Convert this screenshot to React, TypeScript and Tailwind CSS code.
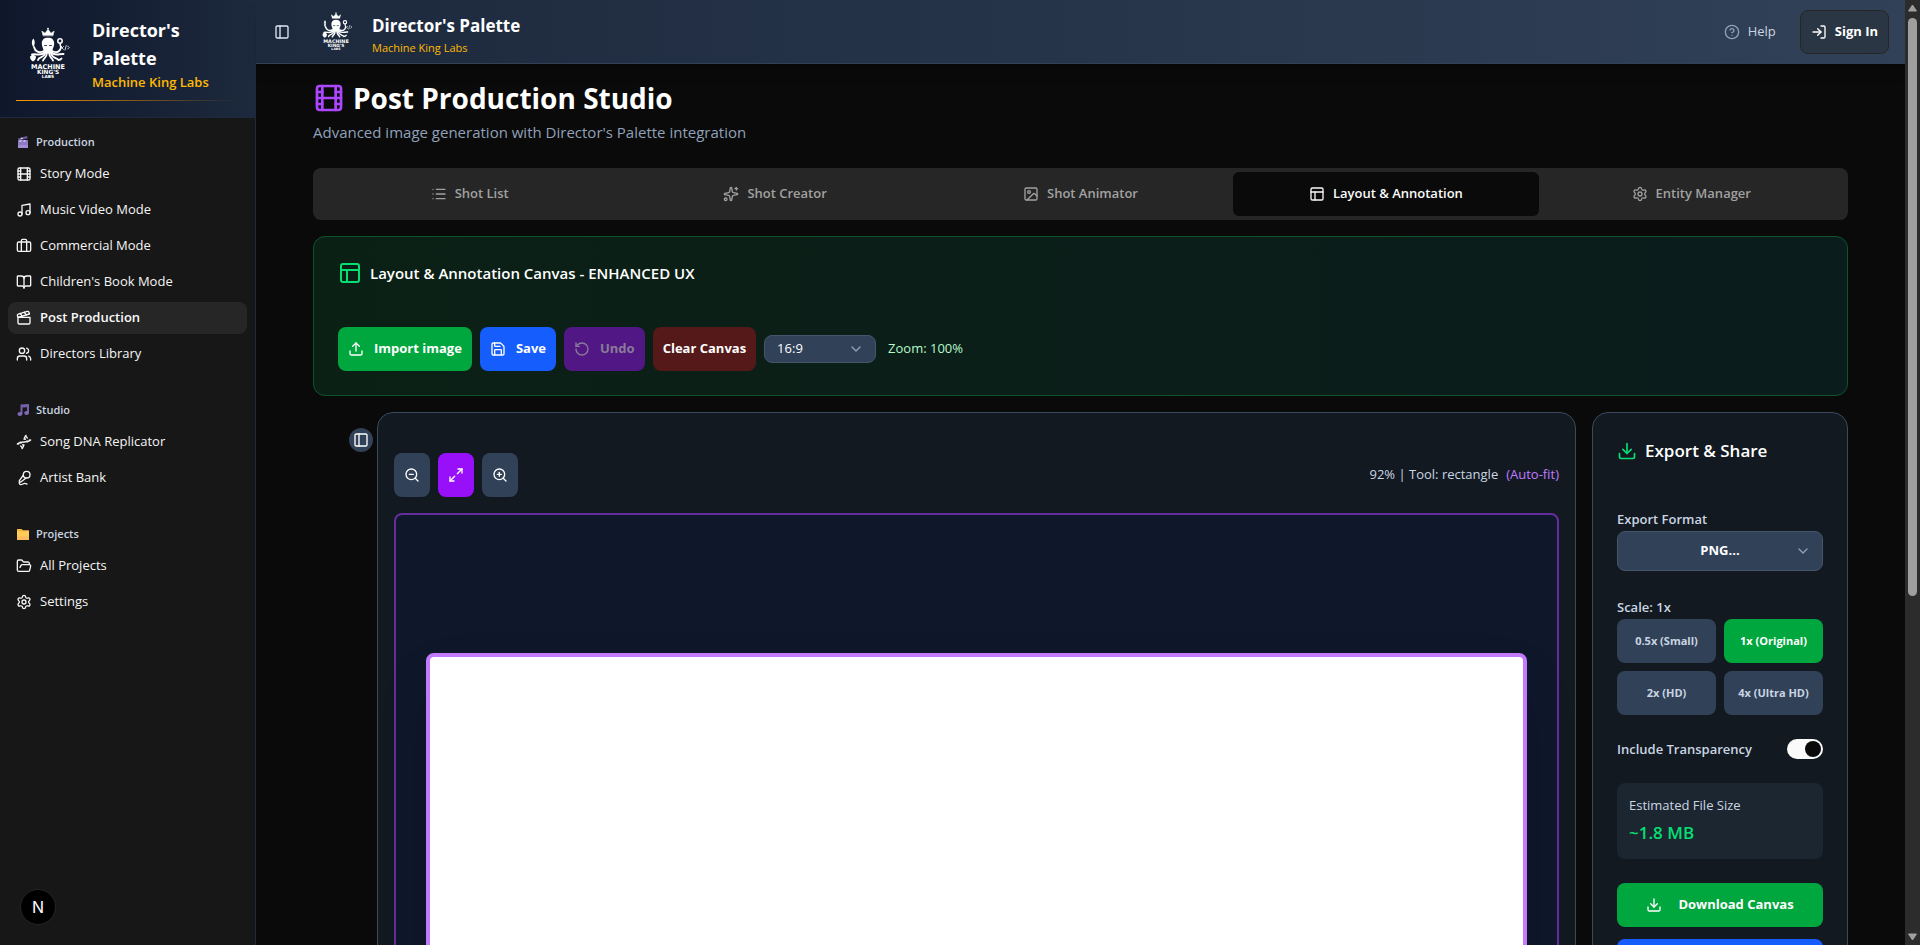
import React, { type ReactNode } from "react";
import {
  BookOpen, Briefcase, ChevronDown, CircleHelp, Clapperboard, Copy, Dna, Download, Film, FolderOpen,
  Image as ImageIcon, List, LogIn, Maximize2, MicVocal, Music, PanelLeft, PanelsTopLeft,
  RotateCcw, Save, Settings, Sparkles, Upload, Users, ZoomIn, ZoomOut, type LucideIcon,
} from "lucide-react";

function Logo({ className }: { className: string }) {
  return (
    <svg viewBox="-4 2 64 64" className={className} fill="none" stroke="#fff" strokeLinecap="round" role="img" aria-label="Machine King's Labs logo">
      <path d="M23 15.500l-1.200-4.500 3.200 2.200 3-4 3 4 3.200-2.200-1.200 4.500z" fill="#fff" strokeWidth="0.5" strokeLinejoin="round" />
      <circle cx="28" cy="8.600" r="0.900" fill="#fff" stroke="none" />
      <path d="M28 17.500c-4.200 0-6.200 2.800-6.200 6 0 3 1.500 4.500 1.600 6.500l1.600 3.500h6l1.600-3.500c.1-2 1.600-3.500 1.600-6.500 0-3.200-2-6-6.200-6z" fill="#fff" stroke="none" />
      <path d="M24.500 25.500h2M29.500 25.500h2" stroke="#0f172b" strokeWidth="0.8" />
      <g strokeWidth="1.900">
        <path d="M24 31c-5 2.500-9 .5-10-4" />
        <path d="M32 31c5 2.500 8.500 .5 9-4" />
        <path d="M24.500 32.500c-4 4-8 1-12.500 2" />
        <path d="M31.500 32.500c4 4 8 1 12 1.500" />
        <path d="M25 33.500c-1.500 5-6 3-7 6.500" />
        <path d="M31 33.500c1.500 5 5.500 4 7.500 6.500 1.200 0 2.300-.5 3-1.500" />
        <path d="M26.800 33.500c-.3 4-2.800 4.500-3.800 7" />
        <path d="M29.200 33.500c.3 4 2.800 4.500 3.800 7" />
      </g>
      <path d="M13.300 19.500c-1.300 2-1 4 0 6.500M13.300 19.500c1.300 2 1 4 0 6.500" strokeWidth="1.300" />
      <circle cx="40" cy="21" r="2.200" strokeWidth="1.500" />
      <path d="M40 23.500l.8 4" strokeWidth="1.500" />
      <path d="M43.500 26.500l-1.500 1.500 1.500 1.500M46.200 25.600l-1.200 4.400M47.700 26l1.500 1.500-1.500 1.500" strokeWidth="0.8" />
      <path d="M10 36.500l2-1.500h2l2 1.500c0 2.800-1.500 4.200-3 5-1.500-.8-3-2.200-3-5z" fill="#fff" stroke="none" />
      <g fill="#fff" stroke="none" textAnchor="middle" className="font-['DejaVu_Sans'] font-bold">
        <text x="28" y="48.500" fontSize="6.500">MACHINE</text>
        <text x="28" y="54" fontSize="5.800">KING'S</text>
        <text x="28" y="58.300" fontSize="4.300">LABS</text>
      </g>
    </svg>
  );
}

function ClapperEmoji() {
  return (
    <svg viewBox="0 0 14 14" className="size-3.5" aria-hidden="true">
      <path d="M2 3.500L11 1l.7 2.200L2.600 5.500z" fill="#6d5a9c" />
      <rect x="2" y="5" width="10" height="8" rx="0.5" fill="#8e79c4" />
      <rect x="2" y="10" width="10" height="3" fill="#a48bd6" />
      <path d="M4 5.200h2L5 6.800H3zM8 5.200h2L9 6.800H7z" fill="#d9d0f0" />
      <path d="M4.500 2.900l1.700-.5.8 1.400-1.700.5z" fill="#d9d0f0" />
    </svg>
  );
}

function NotesEmoji() {
  return (
    <svg viewBox="0 0 14 14" className="size-3.5" aria-hidden="true">
      <path d="M4.500 1.500L13 1v9h-2V4.200l-4.500.4V11h-2z" fill="#7561ab" />
      <ellipse cx="3.900" cy="11" rx="2.400" ry="2" fill="#7f69b8" />
      <ellipse cx="10.600" cy="9.900" rx="2.400" ry="2" fill="#7f69b8" />
    </svg>
  );
}

function FolderEmoji() {
  return (
    <svg viewBox="0 0 14 14" className="size-3.5" aria-hidden="true">
      <path d="M1 2h4.500L7 3.300h6V13H1z" fill="#f5b83d" />
      <path d="M1 4.300h12V13H1z" fill="#ffcb57" />
      <path d="M1 9.500h12V13H1z" fill="#fdba5f" />
    </svg>
  );
}

type Item = { label: string; icon: LucideIcon; active?: boolean };

const groups: { title: string; emoji: ReactNode; items: Item[] }[] = [
  {
    title: "Production",
    emoji: <ClapperEmoji />,
    items: [
      { label: "Story Mode", icon: Film },
      { label: "Music Video Mode", icon: Music },
      { label: "Commercial Mode", icon: Briefcase },
      { label: "Children's Book Mode", icon: BookOpen },
      { label: "Post Production", icon: Clapperboard, active: true },
      { label: "Directors Library", icon: Users },
    ],
  },
  {
    title: "Studio",
    emoji: <NotesEmoji />,
    items: [
      { label: "Song DNA Replicator", icon: Dna },
      { label: "Artist Bank", icon: MicVocal },
    ],
  },
  {
    title: "Projects",
    emoji: <FolderEmoji />,
    items: [
      { label: "All Projects", icon: FolderOpen },
      { label: "Settings", icon: Settings },
    ],
  },
];

const tabs: Item[] = [
  { label: "Shot List", icon: List },
  { label: "Shot Creator", icon: Sparkles },
  { label: "Shot Animator", icon: ImageIcon },
  { label: "Layout & Annotation", icon: PanelsTopLeft, active: true },
  { label: "Entity Manager", icon: Settings },
];

const scales = [
  { label: "0.5x (Small)" },
  { label: "1x (Original)", active: true },
  { label: "2x (HD)" },
  { label: "4x (Ultra HD)" },
];

function Sidebar() {
  return (
    <aside className="flex w-64 shrink-0 flex-col border-r border-slate-800 bg-neutral-900">
      <div className="border-b border-slate-800 bg-linear-to-r from-slate-900 to-slate-800 p-4">
        <div className="flex items-center gap-3">
          <Logo className="size-16 shrink-0" />
          <div>
            <h2 className="text-lg leading-7 font-bold text-white">Director's Palette</h2>
            <p className="text-[13px] leading-5 font-semibold text-amber-400">Machine King Labs</p>
          </div>
        </div>
        <div className="mt-2 h-px bg-linear-to-r from-amber-500 to-transparent" />
      </div>
      <nav className="flex flex-col gap-2">
        {groups.map((g) => (
          <section key={g.title} className="p-2">
            <h3 className="flex h-8 items-center gap-1.5 px-2 text-[11px] font-semibold text-slate-300">
              {g.emoji}
              {g.title}
            </h3>
            <ul className="flex flex-col gap-1">
              {g.items.map(({ label, icon: Icon, active }) => (
                <li key={label}>
                  <a
                    href="#"
                    className={
                      active
                        ? "flex h-8 items-center gap-2 rounded-lg bg-neutral-800 px-2 text-[13px] font-semibold text-neutral-50"
                        : "flex h-8 items-center gap-2 rounded-lg px-2 text-[13px] text-neutral-100"
                    }
                  >
                    <Icon className="size-4" />
                    {label}
                  </a>
                </li>
              ))}
            </ul>
          </section>
        ))}
      </nav>
    </aside>
  );
}

function Header() {
  return (
    <header className="flex h-16 shrink-0 items-center justify-between border-b border-slate-700 bg-linear-to-r from-slate-800 to-slate-700 pr-4 pl-3 shadow-lg">
      <div className="flex items-center">
        <button type="button" aria-label="Toggle sidebar" className="mr-4 flex size-7 items-center justify-center text-slate-200">
          <PanelLeft className="size-4" />
        </button>
        <Logo className="mr-3 size-12" />
        <div className="pt-2">
          <div className="text-[17px] leading-6 font-bold text-white">Director's Palette</div>
          <div className="text-[11px] leading-5 text-amber-400">Machine King Labs</div>
        </div>
      </div>
      <div className="flex items-center gap-6">
        <a href="#" className="flex items-center gap-2 text-[13px] text-slate-300">
          <CircleHelp className="size-4 text-slate-400" />
          Help
        </a>
        <button type="button" className="flex h-11 items-center gap-2 rounded-lg border border-neutral-800 bg-[#2b3644] px-2.5 text-[13px] font-bold text-white">
          <LogIn className="size-4" />
          Sign In
        </button>
      </div>
    </header>
  );
}

function Toolbar() {
  return (
    <section className="rounded-xl border border-green-900 bg-linear-to-r from-[#0b2015] to-[#0b1c1c] p-6">
      <h2 className="flex items-center gap-2 text-[15px] leading-6 font-semibold text-white">
        <PanelsTopLeft className="size-6 text-[#05df72]" />
        Layout & Annotation Canvas - ENHANCED UX
      </h2>
      <div className="mt-[42px] flex flex-wrap items-center gap-2">
        <button type="button" className="flex h-11 items-center gap-2.5 rounded-lg bg-green-600 px-2.5 text-[13px] font-bold text-white">
          <Upload className="size-4" />
          Import image
        </button>
        <button type="button" className="flex h-11 items-center gap-2.5 rounded-lg bg-blue-600 px-2.5 text-[13px] font-bold text-white">
          <Save className="size-4" />
          Save
        </button>
        <button type="button" disabled className="flex h-11 items-center gap-2.5 rounded-lg bg-[#511785] px-2.5 text-[13px] font-bold text-[#8a7b98]">
          <RotateCcw className="size-4" />
          Undo
        </button>
        <button type="button" className="h-11 rounded-lg bg-[#541918] px-2.5 text-[13px] font-bold text-white">
          Clear Canvas
        </button>
        <div className="relative">
          <select aria-label="Aspect ratio" className="block h-7 w-28 appearance-none rounded-lg border border-slate-600 bg-slate-700 px-3 text-[13px] text-white">
            <option>16:9</option>
            <option>1:1</option>
            <option>9:16</option>
          </select>
          <ChevronDown className="pointer-events-none absolute top-1.5 right-3 size-4 text-slate-400" />
        </div>
        <span className="ml-1 text-[13px] text-green-200">Zoom: 100%</span>
      </div>
    </section>
  );
}

function CanvasPanel() {
  return (
    <section className="min-w-0 flex-1 rounded-2xl border border-[#3b4a5e] bg-[#121921] px-4 pt-10 pb-4">
      <div className="flex items-center justify-between">
        <div className="flex gap-2">
          <button type="button" aria-label="Zoom out" className="flex h-11 w-9 items-center justify-center rounded-lg bg-slate-700 text-white">
            <ZoomOut className="size-4" />
          </button>
          <button type="button" aria-label="Fit to screen" className="flex h-11 w-9 items-center justify-center rounded-lg bg-purple-600 text-white">
            <Maximize2 className="size-4" />
          </button>
          <button type="button" aria-label="Zoom in" className="flex h-11 w-9 items-center justify-center rounded-lg bg-slate-700 text-white">
            <ZoomIn className="size-4" />
          </button>
        </div>
        <p className="flex gap-2 text-[13px] text-slate-300">
          92% | Tool: rectangle <span className="text-purple-400">(Auto-fit)</span>
        </p>
      </div>
      <div className="mt-4 rounded-lg border-2 border-[#642d9c] bg-slate-900 px-[30px] py-[138px]">
        <div className="aspect-video rounded-lg border-4 border-purple-400 bg-white shadow-2xl" />
      </div>
    </section>
  );
}

function ExportPanel() {
  return (
    <section className="w-64 shrink-0 rounded-2xl border border-[#3b4a5e] bg-[#121921] p-6">
      <h2 className="flex items-center gap-2 text-[17px] leading-7 font-semibold text-white">
        <Download className="size-5 text-[#05df72]" />
        Export & Share
      </h2>
      <div className="mt-11">
        <label htmlFor="format" className="mb-0.5 block text-[13px] leading-5 font-semibold text-slate-300">Export Format</label>
        <div className="relative">
          <select id="format" className="block h-10 w-full appearance-none rounded-lg border border-slate-600 bg-slate-700 text-center text-[13px] font-bold text-white [text-align-last:center]">
            <option>PNG...</option>
            <option>JPEG...</option>
          </select>
          <ChevronDown className="pointer-events-none absolute top-3 right-3 size-4 text-slate-400" />
        </div>
      </div>
      <div className="mt-[26px]">
        <div className="mb-0.5 text-[13px] leading-5 font-semibold text-slate-300">Scale: 1x</div>
        <div className="grid grid-cols-2 gap-2">
          {scales.map((s) => (
            <button
              key={s.label}
              type="button"
              className={
                s.active
                  ? "h-11 rounded-lg bg-green-600 text-[11px] font-bold text-white"
                  : "h-11 rounded-lg bg-slate-700 text-[11px] font-bold text-slate-300"
              }
            >
              {s.label}
            </button>
          ))}
        </div>
      </div>
      <label className="mt-6 flex items-center justify-between text-[13px] leading-5 font-semibold text-slate-300">
        Include Transparency
        <input
          type="checkbox"
          role="switch"
          defaultChecked
          className="flex h-5 w-9 appearance-none items-center rounded-full bg-neutral-50 px-0.5 before:size-4 before:rounded-full before:bg-neutral-950 checked:before:ml-4"
        />
      </label>
      <div className="mt-6 rounded-lg bg-[#1c2630] p-3">
        <div className="text-[13px] leading-5 text-slate-300">Estimated File Size</div>
        <div className="mt-1 text-[17px] leading-7 font-semibold text-[#05df72]">~1.8 MB</div>
      </div>
      <button type="button" className="mt-6 flex h-11 w-full items-center justify-center gap-4 rounded-lg bg-green-600 text-[13px] font-bold text-white">
        <Download className="size-4" />
        Download Canvas
      </button>
      <button type="button" aria-label="Copy canvas" className="mt-3 flex h-11 w-full items-center justify-center rounded-lg bg-blue-600 text-white">
        <Copy className="size-4" />
      </button>
    </section>
  );
}

export default function App() {
  return (
    <div className="flex h-screen overflow-hidden bg-neutral-950 font-['Open_Sans',sans-serif] text-neutral-50">
      <Sidebar />
      <div className="flex min-w-0 flex-1 flex-col">
        <Header />
        <main className="min-h-0 flex-1 overflow-y-auto py-4 [scrollbar-width:none]">
          <div className="mx-auto flex max-w-[1535px] flex-col gap-4">
            <div className="mb-2">
              <h1 className="flex items-center gap-2 text-[28px] leading-9 font-bold text-white">
                <Film className="size-8 text-[#ad46ff]" />
                Post Production Studio
              </h1>
              <p className="mt-1 text-[15px] leading-6 text-slate-400">
                Advanced image generation with Director's Palette integration
              </p>
            </div>
            <div role="tablist" className="grid grid-cols-5 rounded-lg bg-neutral-800 p-1">
              {tabs.map(({ label, icon: Icon, active }) => (
                <button
                  key={label}
                  type="button"
                  role="tab"
                  aria-selected={!!active}
                  className={
                    active
                      ? "flex h-11 items-center justify-center gap-2 rounded-md bg-neutral-950 text-[13px] font-semibold text-neutral-50"
                      : "flex h-11 items-center justify-center gap-2 rounded-md text-[13px] font-semibold text-neutral-400"
                  }
                >
                  <Icon className="size-4" />
                  {label}
                </button>
              ))}
            </div>
            <Toolbar />
            <div className="flex items-start gap-4">
              <div className="relative w-12 shrink-0">
                <button type="button" aria-label="Expand tools" className="absolute top-4 -right-3 flex size-6 items-center justify-center rounded-full bg-slate-700 text-white">
                  <PanelLeft className="size-4" />
                </button>
              </div>
              <CanvasPanel />
              <ExportPanel />
            </div>
          </div>
        </main>
      </div>
      <div aria-hidden="true" className="flex w-[15px] shrink-0 flex-col items-center bg-[#2c2c2c] py-1">
        <svg viewBox="0 0 9 8" className="h-2 w-[9px]"><path d="M4.500 1L8.500 7h-8z" fill="#9f9f9f" stroke="#9f9f9f" strokeLinejoin="round" /></svg>
        <div className="mt-1.5 h-[61.700%] w-[9px] rounded-full bg-[#9f9f9f]" />
        <svg viewBox="0 0 9 8" className="mt-auto h-2 w-[9px]"><path d="M4.500 7L8.500 1h-8z" fill="#9f9f9f" stroke="#9f9f9f" strokeLinejoin="round" /></svg>
      </div>
      <button type="button" aria-label="Open developer tools" className="fixed bottom-5 left-5 flex size-9 items-center justify-center rounded-full border border-neutral-800 bg-black font-['Inter'] text-base text-white">
        N
      </button>
    </div>
  );
}
